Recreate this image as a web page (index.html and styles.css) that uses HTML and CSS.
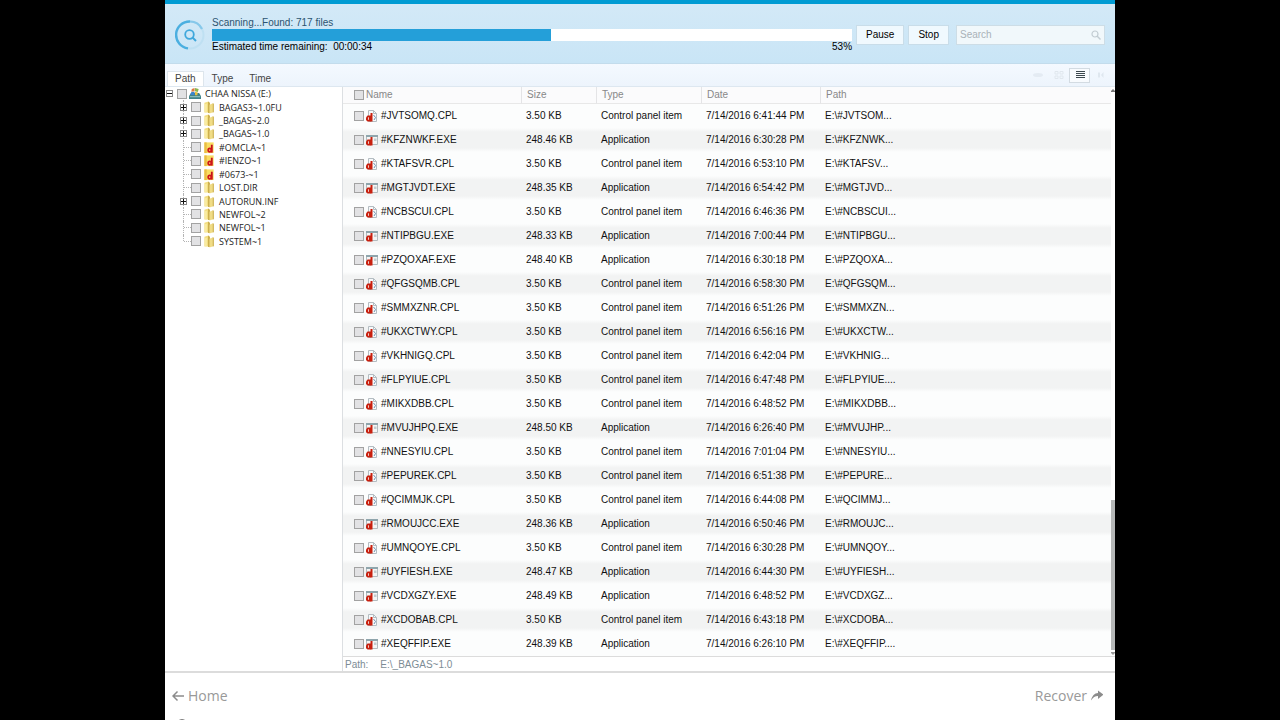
FILE: index.html
```
<!DOCTYPE html>
<html lang="en">
<head>
    <meta charset="UTF-8">
    <meta name="viewport" content="width=device-width, initial-scale=1.0">
    <title>File Recovery</title>
    <link rel="stylesheet" href="styles.css">
</head>
<body>
    <svg class="symbols" aria-hidden="true">
        <symbol id="icon-folder" viewBox="0 0 12 14">
            <path d="M1 2l4.500-1.500v12L1 12.500z" fill="#f3de80"/>
            <path d="M5 .500l2 1.500v11L5 13z" fill="#c9ab45"/>
            <path d="M6.500 4l4-1.500v9.500l-4 1.500z" fill="#f0dc86"/>
            <path d="M10 2.500l1.300.500v9l-1.300.500z" fill="#cfb458"/>
            <path d="M2 3.500l1.500-.500v8.500L2 12z" fill="#fbf0b0"/>
        </symbol>
        <symbol id="icon-folder-red" viewBox="0 0 12 14">
            <path d="M1 1.500h10v11.500H1z" fill="#f9dd62"/>
            <path d="M1 1.500h2.500v11.500H1z" fill="#e9bd45"/>
            <path d="M9 4v8.500" stroke="#c5121a" stroke-width="2"/>
            <ellipse cx="6.800" cy="9.800" rx="1.700" ry="1.900" fill="none" stroke="#d0161b" stroke-width="1.900"/>
        </symbol>
        <symbol id="icon-drive" viewBox="0 0 13 13">
            <path d="M0 9.500L2 6h9l2 3.500V12.500H0z" fill="#3f8289"/>
            <path d="M1 9.500h11v1H1z" fill="#a5d3cf"/>
            <path d="M3 1.500l3-1v3.500L2.500 4.500z" fill="#dc7a3c"/>
            <path d="M6.500.500l4 1-1 3.500-3-1z" fill="#8ab64f"/>
            <path d="M2.500 5L6 4.500V8H1.500z" fill="#3c86cc"/>
            <path d="M6.500 4.500l3 1L9 8.500H6.500z" fill="#e9c03d"/>
        </symbol>
        <symbol id="icon-cpl" viewBox="0 0 12 12">
            <path d="M2.500.500h5l3 3v8h-8z" fill="#f7f9fa" stroke="#b4bdc2"/>
            <path d="M7.500.500v3h3" fill="none" stroke="#b4bdc2"/>
            <path d="M7.500 5l2 2.500L8 10" fill="none" stroke="#6f93b2"/>
            <path d="M5.500 3v8.500" stroke="#c8200f" stroke-width="2"/>
            <path d="M0 7.500L1.500 5.500H5V11.500H1.500L0 10z" fill="#c8200f"/>
            <path d="M2.500 7.300v2.500" stroke="#f3c9c3"/>
        </symbol>
        <symbol id="icon-exe" viewBox="0 0 12 12">
            <path d="M.500 1.500h11v9H.500z" fill="#f4f5f5" stroke="#b4bbbe"/>
            <path d="M0 1h12v2H0z" fill="#8fa5ac"/>
            <path d="M8 4.500h2.500v2.500H8z" fill="#c3cccf"/>
            <path d="M5.500 3v8.500" stroke="#c8200f" stroke-width="2"/>
            <path d="M0 7.500L1.500 5.500H5V11.500H1.500L0 10z" fill="#c8200f"/>
            <path d="M2.500 7.300v2.500" stroke="#f3c9c3"/>
        </symbol>
    </svg>

    <div class="app">
        <header class="header">
            <svg class="scan-icon" viewBox="0 0 30 30" aria-hidden="true">
                <circle cx="15" cy="15" r="13.500" fill="none" stroke="#bfe0f2" stroke-width="2"/>
                <path d="M13 28.400A13.500 13.500 0 0 1 15 1.500" fill="none" stroke="#4bafe0" stroke-width="2.400"/>
                <path d="M15 1.500A13.500 13.500 0 0 1 27 9" fill="none" stroke="#86c8ea" stroke-width="2.200"/>
                <circle cx="14.500" cy="14.500" r="4.300" fill="none" stroke="#3fa8dc" stroke-width="1.800"/>
                <path d="M17.500 17.500l3.500 3.500" stroke="#3fa8dc" stroke-width="2"/>
            </svg>
            <div class="scan">
                <label class="scan-status" for="scan">Scanning...Found: 717 files</label>
                <progress id="scan" class="scan-bar" max="100" value="53"></progress>
                <div class="scan-info">
                    <span>Estimated time remaining: &nbsp;00:00:34</span>
                    <span>53%</span>
                </div>
            </div>
            <div class="actions">
                <button type="button" class="btn">Pause</button>
                <button type="button" class="btn">Stop</button>
            </div>
            <div class="search">
                <input type="text" placeholder="Search" aria-label="Search">
                <svg viewBox="0 0 10 10" aria-hidden="true">
                    <circle cx="4" cy="4" r="3" fill="none" stroke="#c2ccd2" stroke-width="1.200"/>
                    <path d="M6 6l3.500 3.500" stroke="#c2ccd2" stroke-width="1.400"/>
                </svg>
            </div>
        </header>

        <nav class="toolbar">
            <div class="tabs">
                <button type="button" class="tab active">Path</button>
                <button type="button" class="tab">Type</button>
                <button type="button" class="tab">Time</button>
            </div>
            <div class="views">
                <button type="button" class="view" aria-label="Preview">
                    <svg viewBox="0 0 12 12"><ellipse cx="6" cy="6" rx="5" ry="2" fill="#e4ebf3"/></svg>
                </button>
                <button type="button" class="view" aria-label="Icons">
                    <svg viewBox="0 0 12 12"><path d="M2 2.500h3v2.500H2zM7 2.500h3v2.500H7zM2 7h3v2.500H2zM7 7h3v2.500H7z" fill="none" stroke="#e0e7ee"/></svg>
                </button>
                <button type="button" class="view active" aria-label="List">
                    <svg viewBox="0 0 12 12"><path d="M2 2.500h9M2 4.500h9M2 6.500h9M2 8.500h9" stroke="#3c484e"/></svg>
                </button>
                <button type="button" class="view" aria-label="Details">
                    <svg viewBox="0 0 12 12"><path d="M3 3.500h2v5H3zM8.500 3v6L6 6z" fill="#dfe7ef"/></svg>
                </button>
            </div>
        </nav>

        <main class="content">
            <ul class="tree" id="tree"></ul>
            <section class="files">
                <div class="list">
                    <table>
                        <colgroup>
                            <col class="col-name">
                            <col class="col-size">
                            <col class="col-type">
                            <col class="col-date">
                            <col>
                        </colgroup>
                        <thead>
                            <tr>
                                <th><div class="name"><input type="checkbox" aria-label="Select all">Name</div></th>
                                <th>Size</th>
                                <th>Type</th>
                                <th>Date</th>
                                <th>Path</th>
                            </tr>
                        </thead>
                        <tbody id="rows"></tbody>
                    </table>
                    <div class="scrollbar">
                        <span class="arrow-up"></span>
                        <span class="thumb"></span>
                        <span class="arrow-down"></span>
                    </div>
                </div>
                <div class="status"><span>Path:</span><span>E:\_BAGAS~1.0</span></div>
            </section>
        </main>

        <footer class="footer">
            <div class="footer-nav">
                <a href="#">
                    <svg viewBox="0 0 12 12" aria-hidden="true"><path d="M12 6H1M5.500 1.500L1 6l4.500 4.500" fill="none" stroke="#8c8c8c" stroke-width="1.500"/></svg>
                    Home
                </a>
                <a href="#">
                    Recover
                    <svg viewBox="0 0 12 12" aria-hidden="true"><path d="M0 10.500C1 6 3.500 3.300 7 3.100V.500l5.500 4.200L7 9V6.100C4 6.100 2 7.500 0 10.500z" fill="#8c8c8c"/></svg>
                </a>
            </div>
            <svg class="knob" viewBox="0 0 14 14" aria-hidden="true"><circle cx="7" cy="7" r="6" fill="none" stroke="#555" stroke-width="1.500"/></svg>
        </footer>
    </div>

    <script>
        // [label, icon, can be expanded]
        const folders = [
            ['BAGAS3~1.0FU', 'folder', true],
            ['_BAGAS~2.0', 'folder', true],
            ['_BAGAS~1.0', 'folder', true],
            ['#OMCLA~1', 'folder-red', false],
            ['#IENZO~1', 'folder-red', false],
            ['#0673-~1', 'folder-red', false],
            ['LOST.DIR', 'folder', false],
            ['AUTORUN.INF', 'folder', true],
            ['NEWFOL~2', 'folder', false],
            ['NEWFOL~1', 'folder', false],
            ['SYSTEM~1', 'folder', false]
        ];

        // [name, size in KB, time, path]
        const files = [
            ['#JVTSOMQ.CPL', '3.50', '6:41:44', '#JVTSOM...'],
            ['#KFZNWKF.EXE', '248.46', '6:30:28', '#KFZNWK...'],
            ['#KTAFSVR.CPL', '3.50', '6:53:10', '#KTAFSV...'],
            ['#MGTJVDT.EXE', '248.35', '6:54:42', '#MGTJVD...'],
            ['#NCBSCUI.CPL', '3.50', '6:46:36', '#NCBSCUI...'],
            ['#NTIPBGU.EXE', '248.33', '7:00:44', '#NTIPBGU...'],
            ['#PZQOXAF.EXE', '248.40', '6:30:18', '#PZQOXA...'],
            ['#QFGSQMB.CPL', '3.50', '6:58:30', '#QFGSQM...'],
            ['#SMMXZNR.CPL', '3.50', '6:51:26', '#SMMXZN...'],
            ['#UKXCTWY.CPL', '3.50', '6:56:16', '#UKXCTW...'],
            ['#VKHNIGQ.CPL', '3.50', '6:42:04', '#VKHNIG...'],
            ['#FLPYIUE.CPL', '3.50', '6:47:48', '#FLPYIUE....'],
            ['#MIKXDBB.CPL', '3.50', '6:48:52', '#MIKXDBB...'],
            ['#MVUJHPQ.EXE', '248.50', '6:26:40', '#MVUJHP...'],
            ['#NNESYIU.CPL', '3.50', '7:01:04', '#NNESYIU...'],
            ['#PEPUREK.CPL', '3.50', '6:51:38', '#PEPURE...'],
            ['#QCIMMJK.CPL', '3.50', '6:44:08', '#QCIMMJ...'],
            ['#RMOUJCC.EXE', '248.36', '6:50:46', '#RMOUJC...'],
            ['#UMNQOYE.CPL', '3.50', '6:30:28', '#UMNQOY...'],
            ['#UYFIESH.EXE', '248.47', '6:44:30', '#UYFIESH...'],
            ['#VCDXGZY.EXE', '248.49', '6:48:52', '#VCDXGZ...'],
            ['#XCDOBAB.CPL', '3.50', '6:43:18', '#XCDOBA...'],
            ['#XEQFFIP.EXE', '248.39', '6:26:10', '#XEQFFIP....']
        ];

        function icon(name) {
            return `<svg class="icon" aria-hidden="true"><use href="#icon-${name}"/></svg>`;
        }

        document.getElementById('tree').innerHTML =
            `<li class="root"><button type="button" class="toggle open" aria-label="Collapse"></button><label><input type="checkbox">${icon('drive')}<span>CHAA NISSA (E:)</span></label></li>` +
            folders.map(([label, type, expandable]) => {
                const toggle = expandable ? '<button type="button" class="toggle" aria-label="Expand"></button>' : '<span class="branch"></span>';
                return `<li>${toggle}<label><input type="checkbox">${icon(type)}<span>${label}</span></label></li>`;
            }).join('');

        document.getElementById('rows').innerHTML = files.map(([name, size, time, path]) => {
            const exe = name.endsWith('.EXE');
            return `<tr>
                <td><label class="name"><input type="checkbox">${icon(exe ? 'exe' : 'cpl')}<span>${name}</span></label></td>
                <td>${size} KB</td>
                <td>${exe ? 'Application' : 'Control panel item'}</td>
                <td>7/14/2016 ${time} PM</td>
                <td>E:\\${path}</td>
            </tr>`;
        }).join('');
    </script>
</body>
</html>
```
FILE: styles.css
```
* {
    box-sizing: border-box;
}
body {
    margin: 0;
    height: 100vh;
    overflow: hidden;
    background: #000;
    color: #111;
    font: 10px/12px "Liberation Sans", Arial, sans-serif;
}
button, input {
    font: inherit;
    margin: 0;
}
button {
    cursor: pointer;
}
.symbols {
    display: none;
}
.app {
    display: flex;
    flex-direction: column;
    max-width: 950px;
    margin: 0 auto;
    background: #fff;
    border-top: 4px solid #009bd3;
}

/* header */
.header {
    display: flex;
    align-items: center;
    height: 60px;
    padding: 2px 10px 0;
    background: linear-gradient(#d3e9f7, #c9e5f6);
    border-bottom: 1px solid #c3dcec;
}
.scan-icon {
    width: 30px;
    height: 30px;
    margin-right: 7px;
}
.scan {
    flex: 1;
}
.scan-status {
    display: block;
    color: #2c5470;
}
.scan-bar {
    display: block;
    width: 100%;
    height: 12px;
    border: 0;
    appearance: none;
    background: #fff;
}
.scan-bar::-webkit-progress-bar {
    background: #fff;
}
.scan-bar::-webkit-progress-value {
    background: #249fd9;
}
.scan-info {
    display: flex;
    justify-content: space-between;
    color: #000;
}
.actions {
    display: flex;
    gap: 4px;
    margin: 0 7px 0 4px;
}
.btn {
    height: 20px;
    padding: 0 9px;
    border: 1px solid #c9dde9;
    background: #f0f9fe;
    color: #000;
}
.search {
    display: flex;
    align-items: center;
    width: 149px;
    height: 20px;
    padding: 0 3px;
    border: 1px solid #cddde6;
    background: #f1f8fb;
}
.search input {
    flex: 1;
    min-width: 0;
    padding: 0;
    border: 0;
    outline: 0;
    background: none;
}
.search input::placeholder {
    color: #a9b2b8;
}
.search svg {
    width: 10px;
    height: 10px;
}

/* tabs and view switch */
.toolbar {
    display: flex;
    justify-content: space-between;
    align-items: flex-end;
    height: 23px;
    padding: 0 4px 0 2px;
    background: linear-gradient(#f4f9ff, #edf4fc);
    border-bottom: 1px solid #dde7f0;
}
.tabs {
    display: flex;
}
.tab {
    height: 15px;
    padding: 0 7px;
    border: 1px solid transparent;
    border-bottom: 0;
    background: none;
    color: #444;
}
.tab.active {
    background: #fff;
    border-color: #dde5ec;
}
.views {
    display: flex;
    align-self: center;
}
.view {
    display: flex;
    align-items: center;
    justify-content: center;
    width: 21px;
    height: 15px;
    padding: 0;
    border: 1px solid transparent;
    background: none;
}
.view svg {
    width: 12px;
    height: 12px;
}
.view.active {
    border-color: #d3dbe2;
    background: #f8fbfe;
}

/* check boxes */
input[type="checkbox"] {
    appearance: none;
    flex: none;
    width: 10px;
    height: 10px;
    border: 1px solid #a2a2a2;
    background: #e2e2e4;
}
input[type="checkbox"]:checked {
    background: #249fd9;
}
.icon {
    flex: none;
    width: 12px;
    height: 12px;
}

/* folder tree */
.content {
    display: flex;
    border-bottom: 2px solid #dcdcdc;
}
.tree {
    display: grid;
    grid-auto-rows: 1fr;
    flex: none;
    width: 177px;
    height: 161px;
    margin: 0;
    padding: 0;
    list-style: none;
    font: 9px/13px "Open Sans", sans-serif;
    color: #222;
}
.tree li {
    position: relative;
    display: flex;
    align-items: center;
    gap: 4px;
    padding-left: 15px;
}
.tree li.root {
    padding-left: 1px;
}
.tree li:not(.root)::before {
    content: "";
    position: absolute;
    left: 18px;
    top: 0;
    bottom: 0;
    border-left: 1px dotted #b4b4b4;
}
.tree li:last-child::before {
    bottom: 50%;
}
.tree label {
    display: flex;
    align-items: center;
    gap: 2px;
}
.tree label span {
    margin-left: 2px;
    white-space: nowrap;
}
.tree .icon {
    height: 13px;
}
.toggle {
    position: relative;
    width: 7px;
    height: 7px;
    padding: 0;
    border: 1px solid #888;
    background: linear-gradient(#111, #111) center / 5px 1px no-repeat,
                linear-gradient(#111, #111) center / 1px 5px no-repeat, #fff;
}
.toggle.open {
    background: linear-gradient(#111, #111) center / 5px 1px no-repeat, #fff;
}
.branch {
    width: 7px;
}
.branch::after {
    content: "";
    display: block;
    margin: 0 -4px 0 4px;
    border-top: 1px dotted #b4b4b4;
}

/* file list */
.files {
    flex: 1;
    min-width: 0;
    border-left: 1px solid #dcdfe2;
}
.list {
    display: flex;
    border-bottom: 1px solid #dcdcdc;
}
table {
    flex: 1;
    min-width: 0;
    table-layout: fixed;
    border-spacing: 0;
}
.col-name {
    width: 178px;
}
.col-size {
    width: 75px;
}
.col-type {
    width: 105px;
}
.col-date {
    width: 119px;
}
th, td {
    padding: 0 0 0 5px;
    text-align: left;
    font-weight: normal;
    white-space: nowrap;
}
th:first-child, td:first-child {
    padding-left: 11px;
}
th {
    height: 17px;
    border-bottom: 1px solid #e8e8e8;
    background: #fbfbfc;
    color: #888;
}
th + th {
    border-left: 1px solid #e4e4e6;
}
td {
    height: 24px;
}
tbody tr {
    background: #fcfdfd;
}
tbody tr:nth-child(even) {
    background: linear-gradient(#fcfdfd, #f2f3f3 4px, #f2f3f3 20px, #fcfdfd);
}
.name {
    display: flex;
    align-items: center;
    gap: 2px;
}
.name span {
    margin-left: 1px;
}
.scrollbar {
    display: flex;
    flex-direction: column;
    align-items: center;
    justify-content: flex-end;
    width: 4px;
    overflow: hidden;
}
.arrow-up, .arrow-down {
    border: 3px solid transparent;
}
.arrow-up {
    margin-top: 2px;
    margin-bottom: auto;
    border-top: 0;
    border-bottom-color: #777;
}
.arrow-down {
    margin: 2px 0 1px;
    border-bottom: 0;
    border-top-color: #999;
}
.thumb {
    width: 4px;
    height: 150px;
    background: #b5b7b7;
}
.status {
    display: flex;
    gap: 12px;
    padding: 2px 2px 0;
    color: #7d8c95;
}

/* footer */
.footer {
    padding: 12px 12px 0 7px;
}
.footer-nav {
    display: flex;
    justify-content: space-between;
}
.footer a {
    display: flex;
    align-items: center;
    gap: 4px;
    color: #999;
    font: 14px/22px "Open Sans", sans-serif;
    text-decoration: none;
}
.footer a svg {
    width: 12px;
    height: 12px;
}
.knob {
    display: block;
    width: 14px;
    height: 14px;
    margin: 12px 0 0 3px;
}
```
